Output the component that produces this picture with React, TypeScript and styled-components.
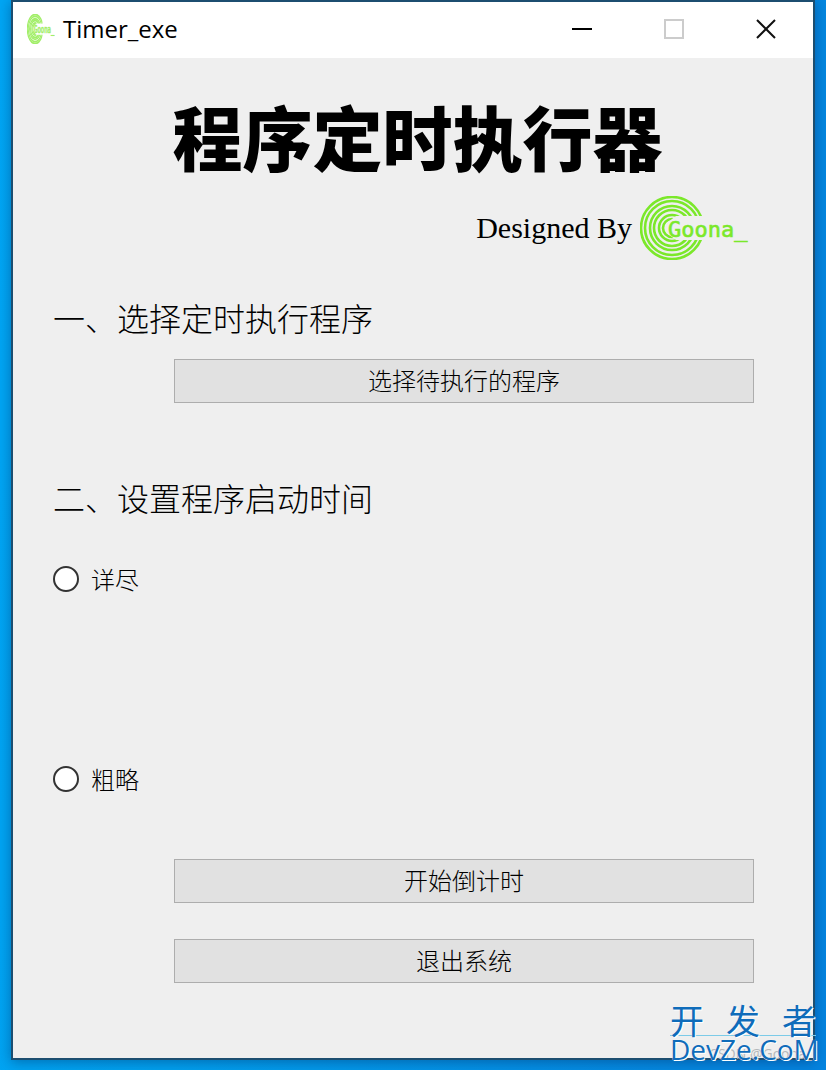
import React, { useId } from "react";
import styled, { createGlobalStyle } from "styled-components";

const GlobalStyle = createGlobalStyle`
  *, *::before, *::after { box-sizing: border-box; }
  body { margin: 0; }
`;

const cjk = `"Noto Sans CJK SC", sans-serif`;

const Desktop = styled.div`
  position: relative;
  display: flex;
  min-height: 100vh;
  padding: 0 11px 10px;
  background: linear-gradient(96deg, #00a6f4 0%, #02a0ee 30%, #0588e0 85%, #0584e0 100%);
  overflow: hidden;
`;

const Window = styled.main`
  flex: 1;
  min-width: 0;
  border: 2px solid #1c4e70;
  background: #efefef;
  box-shadow: 0 2px 12px rgba(0, 30, 80, 0.4);
  color: #000;
`;

const TitleBar = styled.header`
  display: flex;
  align-items: center;
  height: 56px;
  padding: 0 1px 2px 14px;
  background: #fff;
`;

const WindowTitle = styled.span`
  flex: 1;
  margin-left: 8px;
  font: 24px/32px "Open Sans", sans-serif;
`;

const WindowButton = styled.button`
  display: grid;
  place-items: center;
  width: 92px;
  height: 54px;
  padding: 0;
  border: 0;
  background: transparent;
`;

const Content = styled.div`
  padding: 38px 59px 75px 40px;
`;

const AppTitle = styled.h1`
  margin: 0 -28px 0 0;
  font: 900 70px/80px ${cjk};
  text-align: center;
`;

const Credit = styled.div`
  display: flex;
  align-items: center;
  justify-content: flex-end;
  gap: 8px;
  margin: 20px 4px 0 0;
  font: 30px/40px "Liberation Serif", serif;
`;

const Heading = styled.h2<{ $gap: number }>`
  margin: ${(p) => p.$gap}px 0 0;
  font: 300 32px/40px ${cjk};
`;

const ActionButton = styled.button<{ $gap: number }>`
  display: block;
  width: calc(100% - 121px);
  height: 44px;
  margin: ${(p) => p.$gap}px 0 0 121px;
  padding: 0 0 2px;
  border: 1px solid #adadad;
  background: #e1e1e1;
  color: #000;
  font: 300 24px/32px ${cjk};
`;

const Option = styled.label<{ $gap: number }>`
  display: flex;
  align-items: center;
  gap: 12px;
  width: fit-content;
  margin-top: ${(p) => p.$gap}px;
  font: 300 24px/26px ${cjk};
`;

const Radio = styled.input`
  appearance: none;
  width: 26px;
  height: 26px;
  margin: 0;
  border: 2px solid #333;
  border-radius: 50%;
  background: #fff;

  &:checked {
    box-shadow: inset 0 0 0 5px #fff;
    background: #333;
  }
`;

const Watermark = styled.div`
  position: absolute;
  right: 10px;
  bottom: 8px;
  width: 146px;
  color: #0f6cba;
  text-shadow: 0 0 1px #fff, 1px 1px 0 #fff;
`;

const WatermarkName = styled.div`
  display: flex;
  justify-content: space-between;
  border-bottom: 1px solid #7ccbe8;
  font: 400 34px/30px ${cjk};
`;

const WatermarkSite = styled.div`
  font: 28px/26px "Open Sans", sans-serif;
  white-space: nowrap;
`;

const Signature = styled.div`
  position: absolute;
  right: 14px;
  bottom: 6px;
  color: #b4b7b9;
  font: 14px/20px "Open Sans", sans-serif;
`;

const rings = [31, 27, 22, 18, 13, 9];

function Logo({ width, height, faded }: { width: number; height: number; faded?: boolean }) {
  const clip = useId();
  return (
    <svg
      width={width}
      height={height}
      viewBox="0 0 110 64"
      preserveAspectRatio="none"
      opacity={faded ? 0.7 : 1}
      aria-hidden="true"
    >
      <clipPath id={clip}>
        <path d="M0 0H62V20H36L28 26V38L36 44H62V64H0Z" />
      </clipPath>
      <g fill="none" stroke="#7be82a" strokeWidth={faded ? 4 : 2.6} clipPath={`url(#${clip})`}>
        {rings.map((r) => (
          <circle key={r} cx="32" cy="32" r={r} />
        ))}
      </g>
      <text
        x="28"
        y="41"
        fill="#7be82a"
        stroke="#7be82a"
        strokeWidth={faded ? 1.5 : 0.6}
        fontFamily="DejaVu Sans Mono"
        fontSize="22"
      >
        Goona_
      </text>
    </svg>
  );
}

export default function App() {
  return (
    <>
      <GlobalStyle />
      <Desktop>
        <Window>
          <TitleBar>
            <Logo width={28} height={30} faded />
            <WindowTitle>Timer_exe</WindowTitle>
            <WindowButton aria-label="Minimize">
              <svg width="20" height="20"><path d="M0 10H20" stroke="#000" strokeWidth="2" /></svg>
            </WindowButton>
            <WindowButton aria-label="Maximize" disabled>
              <svg width="20" height="20"><path d="M1 1H19V19H1Z" fill="none" stroke="#ccc" strokeWidth="2" /></svg>
            </WindowButton>
            <WindowButton aria-label="Close">
              <svg width="20" height="20"><path d="M1 1L19 19M19 1L1 19" stroke="#111" strokeWidth="2" /></svg>
            </WindowButton>
          </TitleBar>
          <Content>
            <AppTitle>程序定时执行器</AppTitle>
            <Credit>
              <span>Designed By</span>
              <Logo width={110} height={64} />
            </Credit>
            <Heading $gap={37}>一、选择定时执行程序</Heading>
            <ActionButton $gap={22}>选择待执行的程序</ActionButton>
            <Heading $gap={74}>二、设置程序启动时间</Heading>
            <Option $gap={49}>
              <Radio type="radio" name="mode" value="detailed" />
              详尽
            </Option>
            <Option $gap={174}>
              <Radio type="radio" name="mode" value="rough" />
              粗略
            </Option>
            <ActionButton $gap={67}>开始倒计时</ActionButton>
            <ActionButton $gap={36}>退出系统</ActionButton>
          </Content>
        </Window>
        <Signature>CSDN @Goona_</Signature>
        <Watermark>
          <WatermarkName><span>开</span><span>发</span><span>者</span></WatermarkName>
          <WatermarkSite>DevZe.CoM</WatermarkSite>
        </Watermark>
      </Desktop>
    </>
  );
}
